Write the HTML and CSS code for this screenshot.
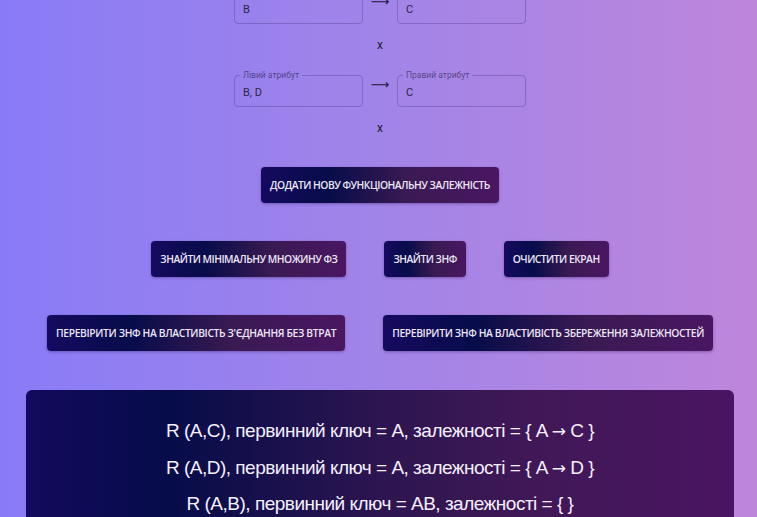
FILE: index.html
```html
<!DOCTYPE html>
<html lang="uk">
<head>
<meta charset="utf-8">
<title>Нормалізація</title>
<link rel="stylesheet" href="styles.css">
</head>
<body>
<main class="page">
  <section class="fd-list">
    <div class="fd-item">
      <div class="fd-row">
        <fieldset class="field"><legend>Лівий атрибут</legend><span class="value">B</span></fieldset>
        <span class="arrow">⟶</span>
        <fieldset class="field"><legend>Правий атрибут</legend><span class="value">C</span></fieldset>
      </div>
      <div class="remove">x</div>
    </div>
    <div class="fd-item">
      <div class="fd-row">
        <fieldset class="field"><legend>Лівий атрибут</legend><span class="value">B, D</span></fieldset>
        <span class="arrow">⟶</span>
        <fieldset class="field"><legend>Правий атрибут</legend><span class="value">C</span></fieldset>
      </div>
      <div class="remove">x</div>
    </div>
  </section>

  <div class="btn-row first">
    <button class="btn">Додати нову функціональну залежність</button>
  </div>
  <div class="btn-row">
    <button class="btn">Знайти мінімальну множину ФЗ</button>
    <button class="btn">Знайти ЗНФ</button>
    <button class="btn">Очистити екран</button>
  </div>
  <div class="btn-row">
    <button class="btn wide">Перевірити ЗНФ на властивість з'єднання без втрат</button>
    <button class="btn wide">Перевірити ЗНФ на властивість збереження залежностей</button>
  </div>

  <section class="result">
    <p>R (A,C), первинний ключ = A, залежності = { A <span class="to">→</span> C }</p>
    <p>R (A,D), первинний ключ = A, залежності = { A <span class="to">→</span> D }</p>
    <p>R (A,B), первинний ключ = AB, залежності = { }</p>
  </section>
</main>
</body>
</html>
```

FILE: styles.css
```css
html, body {
  margin: 0;
  padding: 0;
  overflow: hidden;
  height: 100%;
}
body {
  background: linear-gradient(90deg, #897bf7 0%, #a184e8 50%, #be86db 100%);
  font-family: Roboto, "Liberation Sans", sans-serif;
}
.page {
  width: 760px;
  margin-top: -13px;
  display: flex;
  flex-direction: column;
  align-items: center;
}
.fd-list {
  display: flex;
  flex-direction: column;
}
.fd-item {
  display: flex;
  flex-direction: column;
  align-items: center;
}
.fd-row {
  display: flex;
  align-items: flex-start;
}
.field {
  box-sizing: border-box;
  width: 129px;
  height: 37px;
  margin: 0;
  padding: 0 8px;
  border: 1px solid rgba(40, 20, 90, 0.25);
  border-radius: 4px;
  display: flex;
  align-items: center;
}
.field legend {
  font-size: 8.5px;
  line-height: 10px;
  padding: 0 3px;
  margin-left: -3px;
  color: rgba(30, 20, 60, 0.6);
}
.value {
  font-size: 11px;
  color: #2c2548;
  margin-top: -2px;
}
.arrow {
  width: 34px;
  text-align: center;
  font-family: "DejaVu Sans", sans-serif;
  font-size: 13px;
  line-height: 14px;
  margin-top: 8px;
  color: #1c1838;
}
.remove {
  height: 20px;
  line-height: 20px;
  margin-top: 11px;
  margin-bottom: 15px;
  font-size: 12px;
  color: #1f1a3a;
}
.btn-row {
  display: flex;
  justify-content: center;
  gap: 38px;
  margin-top: 38px;
}
.btn-row.first {
  margin-top: 14px;
}
.btn {
  height: 36px;
  padding: 0 9px;
  border: none;
  border-radius: 4px;
  background: linear-gradient(90deg, #150a5f 0%, #070c4a 28%, #3a1a52 62%, #4a1663 100%);
  box-shadow: 0 1px 3px rgba(40, 10, 80, 0.35);
  color: #ece6f6;
  font-family: "Open Sans", sans-serif;
  font-weight: 600;
  font-size: 10.3px;
  letter-spacing: -0.5px;
  text-transform: uppercase;
  white-space: nowrap;
  cursor: pointer;
}
.btn.wide {
  letter-spacing: -0.35px;
}
.result {
  box-sizing: border-box;
  width: 708px;
  margin-top: 39px;
  padding: 23px 0 30px;
  border-radius: 6px;
  background: linear-gradient(90deg, #130a5e 0%, #060c49 20%, #2c1550 50%, #411857 72%, #4a1462 100%);
  color: #f5f0fc;
  text-align: center;
  font-family: "Liberation Sans", Arial, sans-serif;
  font-size: 19px;
  letter-spacing: -0.5px;
}
.result p {
  margin: 0;
  line-height: 35.5px;
}
.result .to {
  font-family: "DejaVu Sans", sans-serif;
  font-size: 17px;
}
```
